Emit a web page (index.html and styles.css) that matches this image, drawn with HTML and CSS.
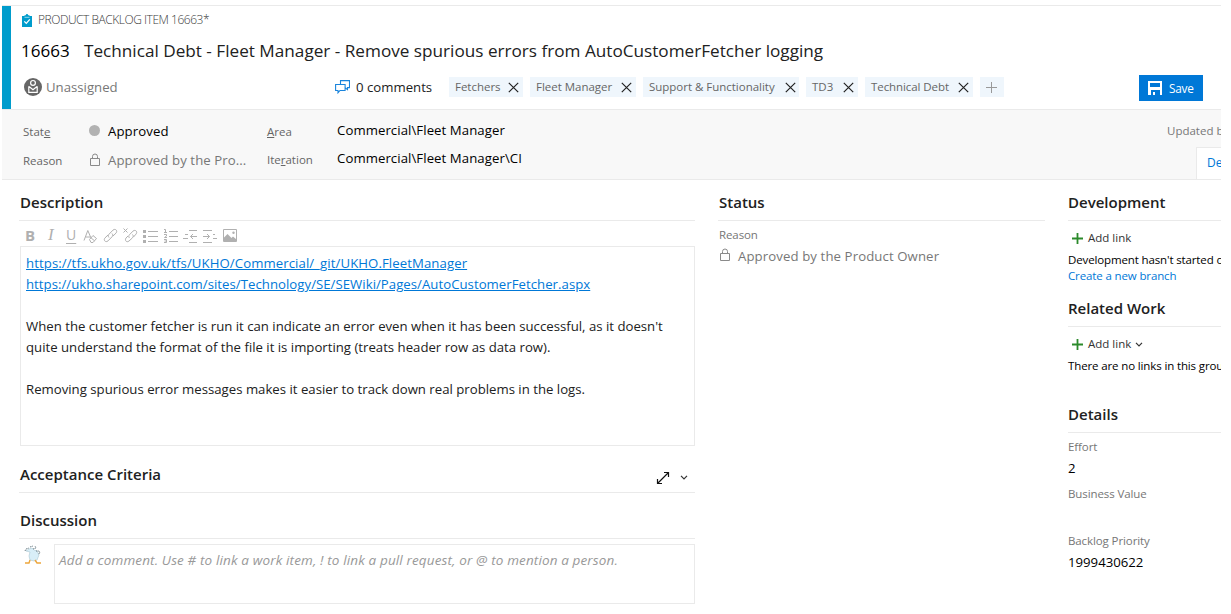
FILE: index.html
```html
<!DOCTYPE html>
<html lang="en">
<head>
<meta charset="utf-8">
<title>Product Backlog Item 16663</title>
<link rel="stylesheet" href="styles.css">
</head>
<body>
<svg class="defs" width="0" height="0">
  <symbol id="x" viewBox="0 0 11 11"><path d="M.8.8l9.4 9.4M10.2.8L.8 10.2" fill="none" stroke="#222" stroke-width="1.2"/></symbol>
  <symbol id="lock" viewBox="0 0 12 14"><path d="M1.5 5.500h9v7h-9zM3.500 5.500V3.500a2.500 2.500 0 0 1 5 0v2" fill="none" stroke="#8a8a8a"/></symbol>
  <symbol id="plus" viewBox="0 0 11 11"><path d="M5.500 0v11M0 5.500h11" fill="none" stroke="#2b8a2b" stroke-width="1.800"/></symbol>
  <symbol id="chev" viewBox="0 0 8 5"><path d="M1 .8l3 3 3-3" fill="none" stroke="#333" stroke-width="1.200"/></symbol>
</svg>
<div class="page">
  <header class="head">
    <div class="type-row">
      <svg width="10" height="13" viewBox="0 0 10 13"><path d="M0 2h10v11H0z" fill="#009ccc"/><path d="M2.500 1.200h1.300C4 .3 4.400 0 5 0s1 .3 1.200 1.200h1.300V3.500h-5z" fill="#009ccc"/><path d="M2.500 3.300h5" stroke="#d8f0f8" stroke-width=".7"/><path d="M2.300 7.400l2 2 3.500-4" fill="none" stroke="#fff" stroke-width="1.300"/></svg>
      <span class="type">PRODUCT BACKLOG ITEM 16663*</span>
    </div>
    <div class="title-row"><span class="id">16663</span><span class="title">Technical Debt - Fleet Manager - Remove spurious errors from AutoCustomerFetcher logging</span></div>
    <div class="meta-row">
      <div class="assignee">
        <svg width="18" height="18" viewBox="0 0 18 18"><circle cx="9" cy="9" r="9" fill="#666"/><circle cx="9" cy="4.900" r="2.400" fill="none" stroke="#fff" stroke-width="1.200"/><path d="M4.800 8.300v6h8.400v-6M5 8.500l4 3.300 4-3.300" fill="none" stroke="#fff" stroke-width="1.200"/></svg>
        <span class="unassigned">Unassigned</span>
      </div>
      <div class="comments">
        <svg width="15" height="14" viewBox="0 0 15 14"><path d="M5.500 4V.600h9v7h-2v2L10.500 8M.600 4.500h9.500v6H5l-2 2.300v-2.300H.600z" fill="none" stroke="#1a84dc" stroke-width="1.100"/></svg>
        <span class="count">0 comments</span>
      </div>
      <div class="tags">
        <span class="tag t1"><span>Fetchers</span><svg width="11" height="11"><use href="#x"/></svg></span>
        <span class="tag t2"><span>Fleet Manager</span><svg width="11" height="11"><use href="#x"/></svg></span>
        <span class="tag t3"><span>Support &amp; Functionality</span><svg width="11" height="11"><use href="#x"/></svg></span>
        <span class="tag t4"><span>TD3</span><svg width="11" height="11"><use href="#x"/></svg></span>
        <span class="tag t5"><span>Technical Debt</span><svg width="11" height="11"><use href="#x"/></svg></span>
        <span class="tag add"><svg width="11" height="11" viewBox="0 0 11 11"><path d="M5.500 0v11M0 5.500h11" stroke="#999"/></svg></span>
      </div>
      <button class="save"><svg width="14" height="14" viewBox="0 0 14 14"><path fill="#fff" fill-rule="evenodd" d="M0 0h14v14H0zM2 2v4h10V2zM3 9v5h2v-3h2v3h5V9z"/></svg><span>Save</span></button>
    </div>
  </header>
  <section class="fields">
    <div class="labels first"><span>Stat<u>e</u></span><span>Reason</span></div>
    <div class="states">
      <div><i class="dot"></i><span class="approved">Approved</span></div>
      <div><svg width="12" height="14"><use href="#lock"/></svg><span class="reason">Approved by the Pro...</span></div>
    </div>
    <div class="labels second"><span><u>A</u>rea</span><span>Ite<u>r</u>ation</span></div>
    <div class="paths"><span>Commercial\Fleet Manager</span><span>Commercial\Fleet Manager\CI</span></div>
    <div class="right"><div class="updated">Updated by</div><div class="tab">Details</div></div>
  </section>
  <main class="cols">
    <div class="main">
      <h2 class="h-desc">Description</h2>
      <div class="toolbar">
        <b>B</b><i>I</i><u>U</u>
        <svg width="15" height="14" viewBox="0 0 15 14"><path d="M1 11.500L4.800 1.500 8 9M2.500 8h4.500M6.500 10.500l3.500-4 3.500 3-3.500 4H8zM8 8.800l3.500 3"/></svg>
        <svg width="15" height="15" viewBox="0 0 15 15"><path d="M6 9.500c-1-1-1-2.300 0-3.300L10 2.100c2.400-2 5 .700 3 3L10 8M9 5.500c1 1 1 2.300 0 3.300L5 12.900c-2.400 2-5-.700-3-3L5 7"/></svg>
        <svg width="15" height="15" viewBox="0 0 15 15"><path d="M6.500 10c-1-1-1-2.300 0-3.300L10 3.100c2.400-2 5 .700 3 3L10.500 9M9.500 6.500c1 1 1 2.300 0 3.300L6 13c-2.400 2-4.600-.700-3-3L5 8M.5.500l4 4M4.500.500l-4 4"/></svg>
        <svg width="15" height="14" viewBox="0 0 15 14"><path d="M0 2.500h3M0 7.500h3M0 12.500h3" stroke-width="3"/><path d="M5 2.500h10M5 7.500h10M5 12.500h10"/></svg>
        <svg width="15" height="14" viewBox="0 0 15 14"><path d="M1 .5h1.500v3M1 3.500h3M1 5.500h2.500V7L1.500 8.500h2.500M1 10.500h2.500v3H1M1.500 12h2M6 2.500h9M6 7.500h9M6 12.500h9"/></svg>
        <svg width="15" height="14" viewBox="0 0 15 14"><path d="M6 1.500h8M6 13.500h8M2 5.500h3M0 9.500h5M14 7.500H7.500M10 5L7.500 7.500 10 10"/></svg>
        <svg width="15" height="14" viewBox="0 0 15 14"><path d="M0 1.500h9M0 13.500h9M10 5.500h2M10 9.500h4M0 7.500h6.500M4 5l2.500 2.500L4 10"/></svg>
        <svg width="15" height="13" viewBox="0 0 15 13"><path d="M.5.500h13v12H.500z"/><path class="solid" d="M1 12V8.500L4.500 5l4 4L10 7.500l3.500 3V12z"/><circle class="solid" cx="10.500" cy="3.700" r="1.200"/></svg>
      </div>
      <div class="editor"><a class="l1">https://tfs.ukho.gov.uk/tfs/UKHO/Commercial/_git/UKHO.FleetManager</a><br><a class="l2">https://ukho.sharepoint.com/sites/Technology/SE/SEWiki/Pages/AutoCustomerFetcher.aspx</a><br><br><span class="l3">When the customer fetcher is run it can indicate an error even when it has been successful, as it doesn't</span><br><span class="l4">quite understand the format of the file it is importing (treats header row as data row).</span><br><br><span class="l5">Removing spurious error messages makes it easier to track down real problems in the logs.</span></div>
      <h2 class="criteria"><span class="h-acc">Acceptance Criteria</span>
        <span class="tools"><svg width="14" height="14" viewBox="0 0 14 14"><path d="M1.500 12.500l11-11M8 1.500h4.500V6M1.500 8v4.500H6" fill="none" stroke="#111" stroke-width="1.200"/></svg><svg width="8" height="5"><use href="#chev"/></svg></span></h2>
      <h2 class="h-disc">Discussion</h2>
      <div class="discuss">
        <svg class="avatar" width="18" height="20" viewBox="0 0 18 20"><path d="M5 4l3-1 2 2 3 1 2 4-2 5-3 1-4-1-1-4 1-4-4-1z" fill="#d8eef8" stroke="#a9c6d2" stroke-width=".6"/><path d="M1 6l1-2 3-1M6 2l3-1M9 4l3-1-1-2M12 6l3 0 1 2-2 1" fill="none" stroke="#6d7f88" stroke-width="1" stroke-dasharray="1.500 .800"/><path d="M6 15l-1 3H1m10-3l2 3h4" fill="none" stroke="#eda63d" stroke-width="1.400"/></svg>
        <div class="comment-box"><span>Add a comment. Use # to link a work item, ! to link a pull request, or @ to mention a person.</span></div>
      </div>
    </div>
    <div class="status">
      <h2 class="h-status">Status</h2>
      <div class="small-label">Reason</div>
      <div class="owner"><svg width="12" height="14"><use href="#lock"/></svg><span>Approved by the Product Owner</span></div>
    </div>
    <div class="side">
      <h2 class="h-dev">Development</h2>
      <div class="addlink"><svg width="11" height="11"><use href="#plus"/></svg><span>Add link</span></div>
      <div class="note dev">Development hasn't started on</div>
      <div class="note branch">Create a new branch</div>
      <h2 class="related">Related Work</h2>
      <div class="addlink"><svg width="11" height="11"><use href="#plus"/></svg><span>Add link</span><svg class="c" width="8" height="5"><use href="#chev"/></svg></div>
      <div class="note links">There are no links in this group.</div>
      <h2 class="details">Details</h2>
      <div class="small-label effort">Effort</div>
      <div class="value">2</div>
      <div class="small-label bv">Business Value</div>
      <div class="small-label bp">Backlog Priority</div>
      <div class="value prio">1999430622</div>
    </div>
  </main>
</div>
</body>
</html>
```
FILE: styles.css
```css
* { box-sizing: border-box; }
body { margin: 0; background: #fff; color: #212121; font: 13.2px/20px "Open Sans", "Noto Sans", sans-serif; white-space: nowrap; }
.defs { display: block; height: 0; }
svg { flex: none; display: block; }
.page { width: 1221px; height: 614px; overflow: hidden; padding: 5px 0 0 2px; }
.head { height: 105px; border-top: 1px solid #eaeaea; border-bottom: 1px solid #eaeaea; box-shadow: inset 9px 0 #009ccc; padding-left: 19px; }
.type-row { display: flex; align-items: center; height: 25px; padding: 3px 0 0 1px; gap: 6px; }
.type { font-size: 12px; font-weight: 300; color: #3c3c3c; letter-spacing: -.47px; }
.type-row svg { margin-top: 1px; }
.title-row { display: flex; font-size: 17.17px; line-height: 24px; height: 24px; margin-top: 8px; }
.id { width: 63px; color: #000; font-size: 17px; }
.meta-row { display: flex; height: 30px; align-items: center; margin-top: 9px; }
.assignee { display: flex; align-items: center; gap: 4px; width: 311px; padding-left: 3px; color: #777; }
.assignee svg { margin-top: -1px; }
.comments { display: flex; align-items: center; gap: 6px; width: 117px; padding-left: 3px; }
.tags { display: flex; gap: 7px; }
.tag { display: flex; align-items: center; justify-content: space-between; height: 20px; padding: 0 4px 0 6px; background: #eff6fc; color: #666; font-size: 11.5px; letter-spacing: -.02px; }
.t1 { width: 74px; }
.t2 { width: 106px; }
.t3 { width: 156px; padding-right: 3px; }
.t4 { width: 52px; }
.t5 { width: 108px; letter-spacing: -.08px; }
.add { width: 24px; padding: 0 6px; }
.save { display: flex; align-items: center; gap: 7px; width: 64px; height: 26px; margin: 2px 18px 0 auto; padding: 0 0 0 9px; border: 0; background: #0078d7; color: #fff; font: 11.8px/20px "Open Sans", sans-serif; letter-spacing: -.2px; }
.fields { display: flex; height: 70px; border-bottom: 1px solid #eaeaea; background: #f8f8f8; padding-left: 20px; }
.labels { display: flex; flex-direction: column; gap: 9px; width: 67px; padding-top: 12px; font-size: 11.5px; color: #666; }
.labels.first { padding-left: 1px; }
.states { width: 178px; padding-top: 11px; }
.states div { display: flex; align-items: center; height: 20px; margin-bottom: 9px; color: #777; }
.dot { width: 11px; height: 11px; border-radius: 50%; background: #b2b2b2; margin: -1px 8px 0 0; }
.states svg { margin: -1px 7px 0 0; }
.states .approved { color: #000; letter-spacing: .1px; }
.reason { letter-spacing: .08px; }
.labels.second { width: 70px; gap: 8px; }
.paths { display: flex; flex-direction: column; gap: 8px; padding-top: 10px; color: #000; letter-spacing: .07px; }
.right { width: 55px; margin-left: auto; overflow: hidden; }
.updated { font-size: 11.5px; color: #777; height: 37px; padding: 11px 0 0 1px; }
.tab { width: 80px; height: 33px; margin-left: 30px; padding: 5px 0 0 10px; border: 1px solid #eaeaea; border-bottom: 0; background: #fff; color: #0078d7; font-size: 12px; }
.cols { display: grid; grid-template-columns: 676px 327px 153px; column-gap: 23px; padding-left: 17px; }
h2 { margin: 0; height: 41px; padding: 12px 0 0 1px; border-bottom: 1px solid #eaeaea; font-size: 15px; line-height: 21px; font-weight: 600; }
.toolbar { display: flex; align-items: center; height: 25px; padding: 2px 0 0 6px; gap: 5px; color: #b0b0b0; font-size: 15px; line-height: 20px; }
.toolbar > * { flex: none; }
.toolbar b, .toolbar i, .toolbar u { width: 15px; font-weight: 400; }
.toolbar b { font-weight: 700; }
.toolbar i { font-family: "Liberation Serif", serif; font-size: 17px; padding-left: 3px; }
.toolbar u { width: 13px; font-size: 14px; padding-left: 1px; text-underline-offset: 3px; }
.toolbar svg { margin-top: 2px; }
.toolbar path { fill: none; stroke: #b0b0b0; }
.toolbar .solid { fill: #b0b0b0; stroke: none; }
.editor { height: 200px; margin-left: 1px; border: 1px solid #eaeaea; padding: 6px 5px; line-height: 21px; }
.editor a { color: #0078d7; text-decoration: underline; }
.l1 { letter-spacing: .08px; }
.l2 { letter-spacing: .03px; }
.criteria { display: flex; justify-content: space-between; height: 47px; padding-top: 18px; }
.tools { display: flex; align-items: center; gap: 10px; padding: 6px 7px 0 0; height: 21px; }
.h-disc { height: 46px; padding-top: 17px; }
.discuss { display: flex; padding: 5px 0 0 5px; }
.avatar { margin: 1px 12px 0 0; }
.comment-box { flex: 1; height: 60px; border: 1px solid #eaeaea; padding: 5px 4px; color: #999; font-style: italic; font-size: 13.5px; letter-spacing: .13px; }
.small-label { font-size: 11.5px; line-height: 18px; color: #767676; letter-spacing: -.1px; }
.status .small-label { margin-top: 5px; padding-left: 1px; }
.owner { display: flex; align-items: center; gap: 7px; margin-top: 2px; padding-left: 1px; color: #777; letter-spacing: .1px; }
.owner svg { margin-top: -2px; }
.side h2 { padding-left: 0; }
.addlink { display: flex; align-items: center; gap: 6px; height: 18px; margin-top: 8px; padding-left: 4px; font-size: 11.5px; color: #333; }
.addlink span { margin-left: -1px; }
.addlink .c { margin-left: -2px; }
.note { font-size: 11.5px; line-height: 16px; color: #000; letter-spacing: -.13px; }
.dev { margin-top: 5px; }
.note.branch { color: #0078d7; }
.side .related { height: 43px; padding-top: 14px; }
.links { margin-top: 5px; }
.side .details { height: 59px; padding-top: 30px; }
.effort { margin-top: 5px; }
.value { height: 22px; line-height: 20px; margin-top: 2px; color: #000; }
.bv { margin-top: 5px; }
.bp { margin-top: 29px; }
```
